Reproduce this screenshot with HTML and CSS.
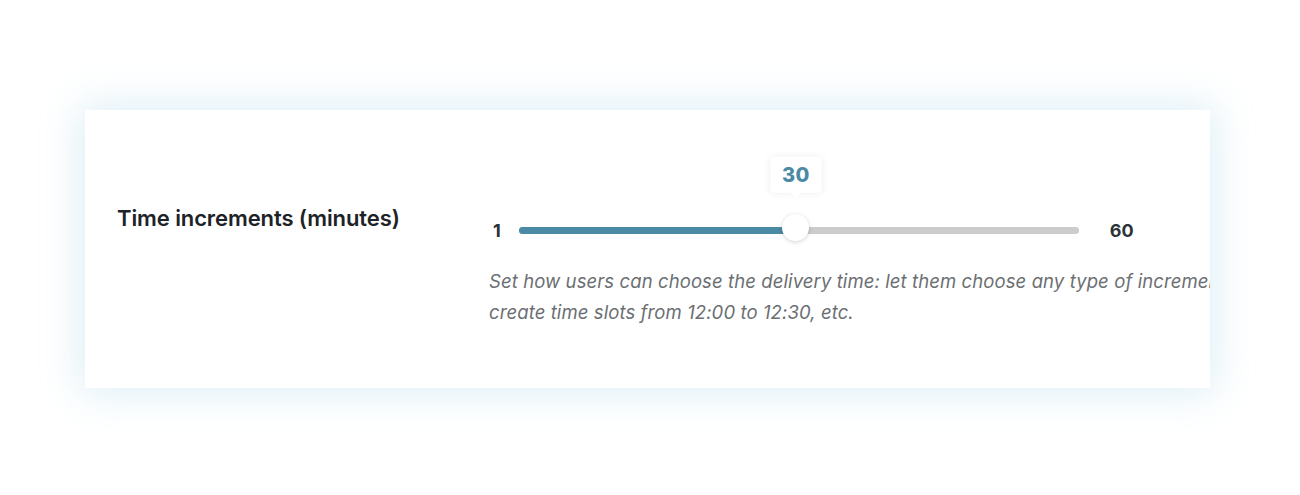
FILE: index.html
```html
<!DOCTYPE html>
<html lang="en">
<head>
<meta charset="utf-8">
<title>Time increments</title>
<link rel="stylesheet" href="styles.css">
</head>
<body>
<div class="card">
  <div class="label">Time increments (minutes)</div>
  <div class="control">
    <div class="slider-row">
      <span class="bound bound-min">1</span>
      <div class="track">
        <div class="fill" style="width: 49.4%"></div>
        <div class="thumb" style="left: 49.4%">
          <div class="tooltip">30</div>
        </div>
      </div>
      <span class="bound bound-max">60</span>
    </div>
    <p class="desc">Set how users can choose the delivery time: let them choose any type of increment, or set 30 minutes to<br>create time slots from 12:00 to 12:30, etc.</p>
  </div>
</div>
</body>
</html>
```

FILE: styles.css
```css
* { box-sizing: border-box; }
html, body { margin: 0; padding: 0; background: #fff; }
body {
  font-family: Inter, "Noto Sans", "DejaVu Sans", sans-serif;
  width: 1300px;
  height: 495px;
  overflow: hidden;
}
.card {
  margin: 110px 0 0 85px;
  width: 1125px;
  height: 278px;
  background: #fff;
  box-shadow: 0 0 38px 4px rgba(130, 195, 220, 0.28);
  padding: 47px 0 0 32px;
  display: grid;
  grid-template-columns: 372px 1fr;
  overflow: hidden;
}
.label {
  margin-top: 48px;
  font-size: 22px;
  font-weight: 600;
  color: #1d2327;
  line-height: 26px;
  letter-spacing: -0.1px;
}
.control {
  padding-top: 57px;
}
.slider-row {
  display: flex;
  align-items: center;
  height: 28px;
}
.bound {
  font-size: 18px;
  font-weight: 700;
  color: #2c3338;
  line-height: 20px;
  margin-top: 5px;
}
.bound-min { margin-left: 4px; margin-right: 18px; }
.bound-max { margin-left: 31px; }
.track {
  position: relative;
  width: 560px;
  height: 7px;
  border-radius: 4px;
  background: #cccccc;
  margin-top: 5px;
}
.fill {
  height: 100%;
  border-radius: 4px;
  background: #4b8aa4;
}
.thumb {
  position: absolute;
  top: 50%;
  width: 27px;
  height: 27px;
  margin: -17px 0 0 -13px;
  border-radius: 50%;
  background: #fff;
  box-shadow: 0 1px 4px rgba(0, 0, 0, 0.18);
}
.tooltip {
  position: absolute;
  left: 50%;
  bottom: 100%;
  margin-bottom: 21px;
  transform: translateX(-50%);
  width: 51px;
  height: 36px;
  background: #fff;
  border-radius: 3px;
  box-shadow: 0 0 8px rgba(0, 0, 0, 0.07);
  color: #4b8aa4;
  font-size: 20px;
  font-weight: 800;
  text-align: center;
  line-height: 36px;
  letter-spacing: 0.3px;
}
.tooltip::after {
  content: "";
  position: absolute;
  left: 50%;
  top: 100%;
  margin-left: -5px;
  border-left: 5px solid transparent;
  border-right: 5px solid transparent;
  border-top: 5px solid #fff;
}
.desc {
  margin: 24px 0 0 0;
  font-size: 18.5px;
  font-style: italic;
  color: #6b6f73;
  line-height: 31px;
  white-space: nowrap;
  letter-spacing: 0.1px;
}
```
